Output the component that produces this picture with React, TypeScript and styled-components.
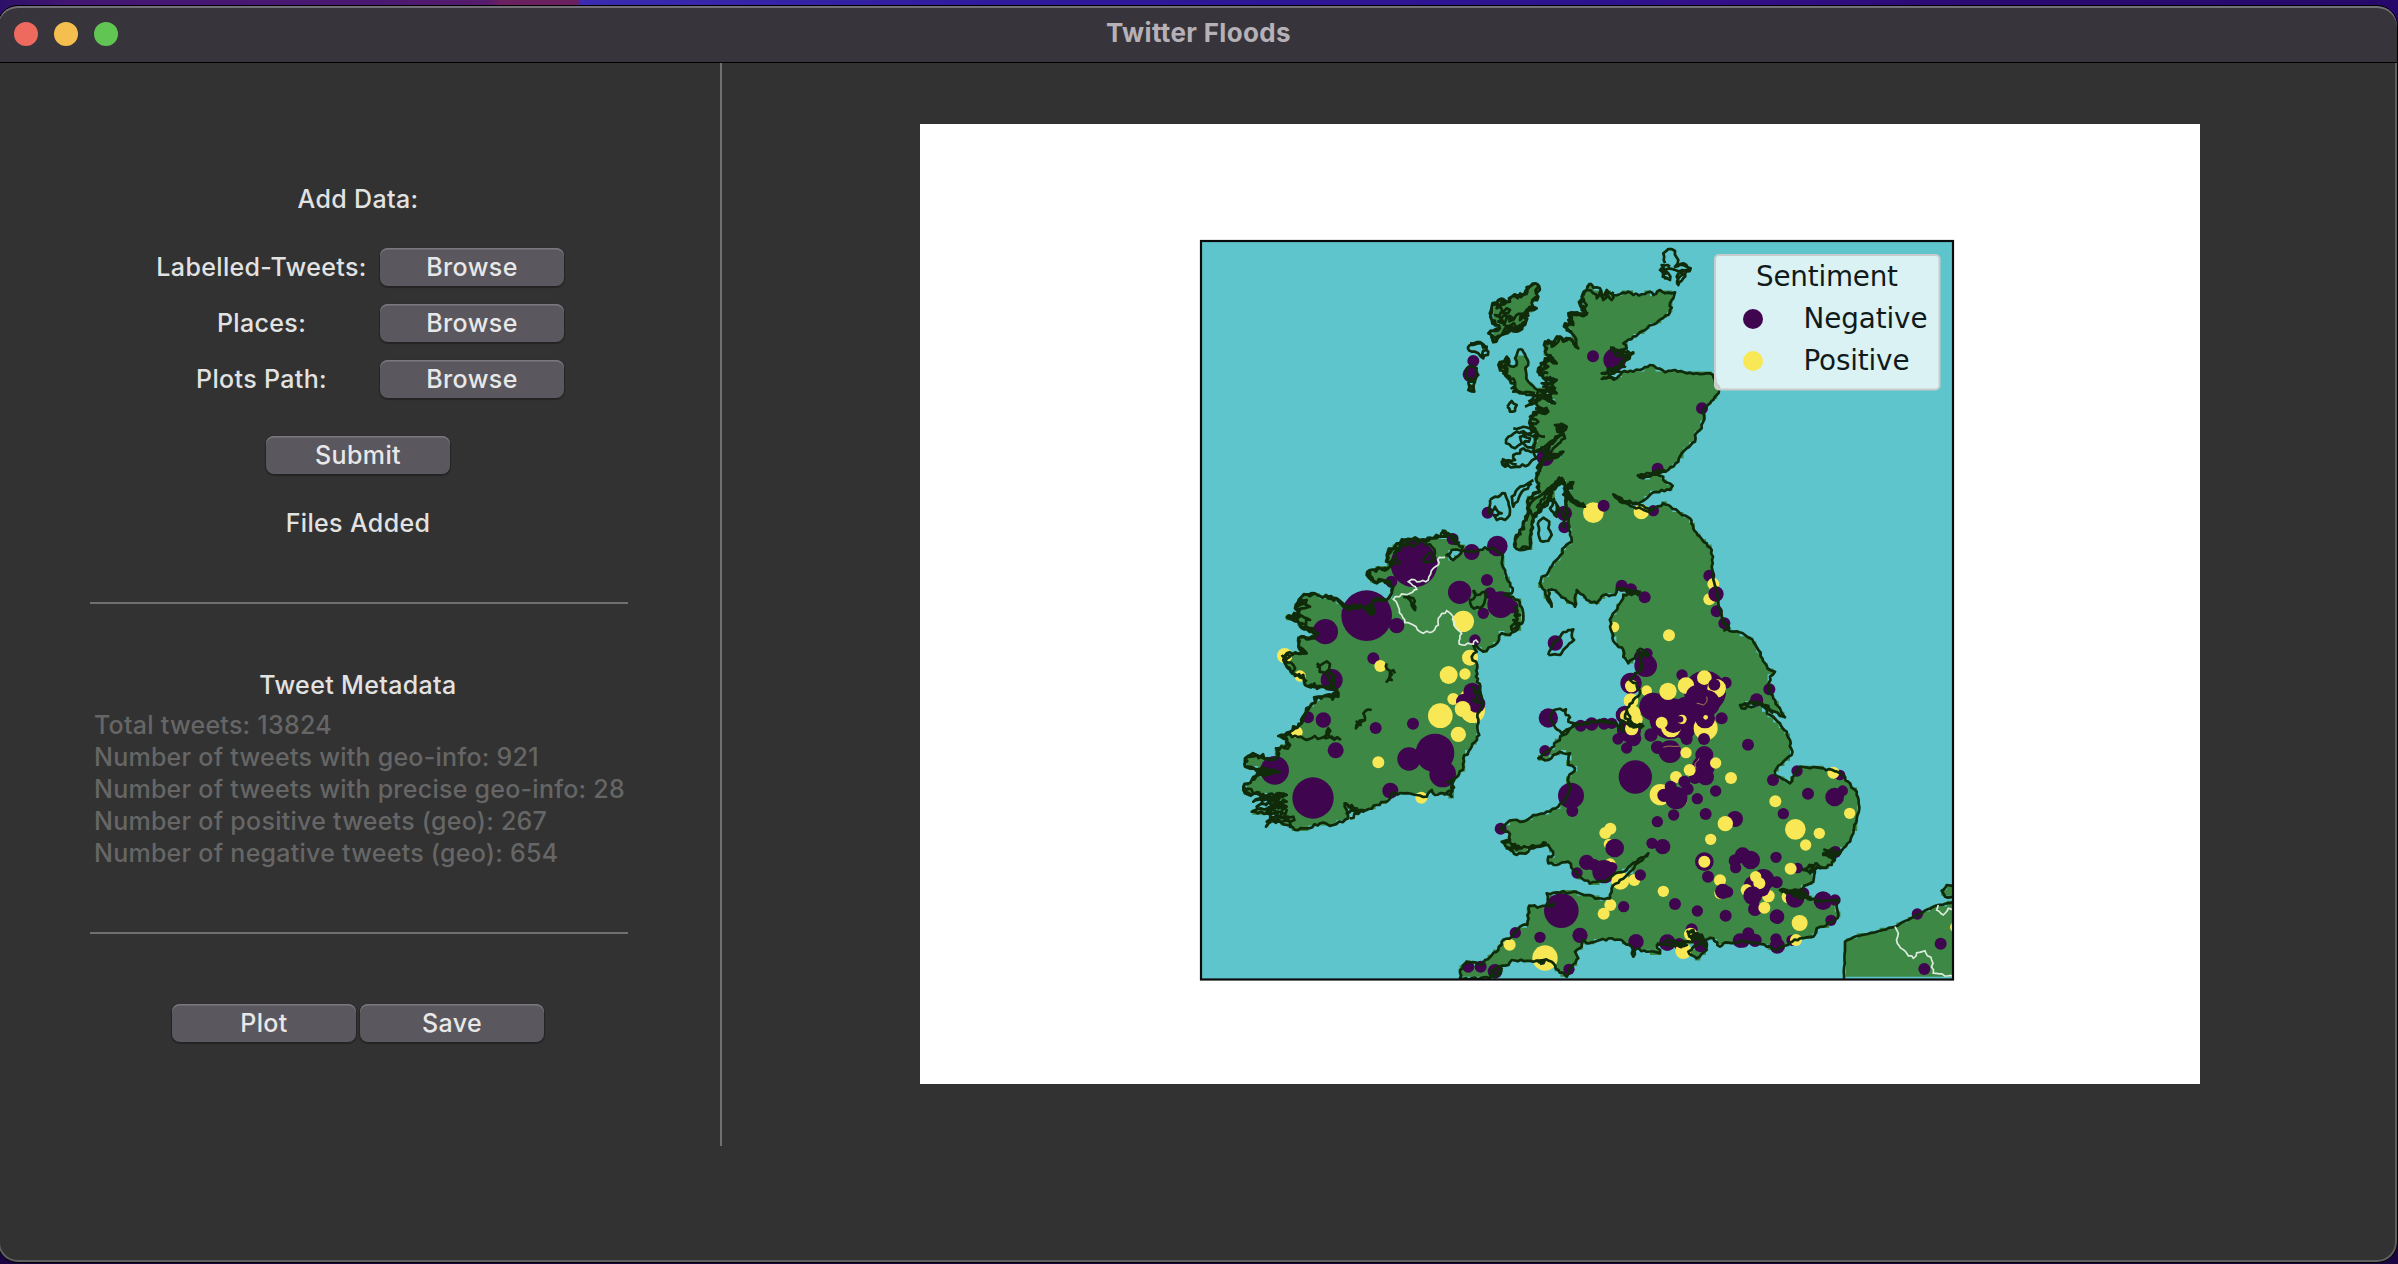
import React from 'react';
import styled, { createGlobalStyle } from 'styled-components';

const GlobalStyle = createGlobalStyle`
  * { box-sizing: border-box; }
  html, body { margin: 0; padding: 0; }
  body {
    height: 1264px;
    overflow: hidden;
    background: #1c0640;
    font-family: Inter, "Liberation Sans", sans-serif;
  }
`;

const Desktop = styled.div`
  width: 2398px;
  height: 1264px;
  padding-top: 5px;
  overflow: hidden;
  background:
    linear-gradient(90deg, #2c1068 0, #431673 70px, #4a1870 380px, #571c6c 490px, #6b2060 500px, #6a205e 578px, #3a2bb0 580px, #2f1a9c 1000px, #2c128e 1600px, #33108a 1700px, #2a0a70 2000px, #26086a 2398px) top / 100% 30px no-repeat,
    #1b0540;
`;

const Window = styled.div`
  display: flex;
  flex-direction: column;
  width: 2401px;
  height: 1258px;
  margin-left: -3px;
  border: 1px solid #000;
  border-radius: 21px;
  overflow: hidden;
  background: #323232;
  box-shadow: inset 0 0 0 2px #5f5f5f;
`;

const TitleBar = styled.header`
  display: grid;
  grid-template-columns: 1fr auto 1fr;
  align-items: center;
  flex: none;
  height: 57px;
  padding: 0 14px 0 16px;
  background: #38343b;
  border-bottom: 1px solid #000;
  border-radius: 20px 20px 0 0;
  box-shadow: inset 0 2px 0 #747078;
`;

const Lights = styled.div`
  display: flex;
  gap: 16px;
`;

const Light = styled.span<{ $color: string }>`
  width: 24px;
  height: 24px;
  border-radius: 50%;
  background: ${(p) => p.$color};
`;

const Title = styled.h1`
  margin: 0;
  padding-bottom: 3px;
  color: #b5b1b7;
  font-size: 26px;
  font-weight: 700;
  letter-spacing: 0.35px;
  line-height: 32px;
`;

const Content = styled.main`
  display: flex;
  align-items: flex-start;
  padding-left: 2px;
`;

const Sidebar = styled.section`
  display: flex;
  flex-direction: column;
  align-items: center;
  width: 720px;
  height: 1083px;
  padding: 120px 4px 0 0;
`;

const Label = styled.div<{ $top?: number }>`
  margin-top: ${(p) => p.$top ?? 0}px;
  color: #e2e2e2;
  font-size: 25px;
  font-weight: 450;
  line-height: 32px;
  letter-spacing: 0.35px;
  white-space: nowrap;
`;

const FileGrid = styled.div`
  display: grid;
  grid-template-columns: 209px 184px;
  column-gap: 14px;
  row-gap: 18px;
  align-items: center;
  justify-items: center;
  margin: 33px 0 38px 0;
  padding-left: 5px;
`;

const Button = styled.button`
  width: 184px;
  height: 38px;
  padding: 0;
  border: 0;
  border-radius: 8px;
  background: #5a575e;
  box-shadow: inset 0 1.5px 0 #7b787f, 0 1px 1px 1px rgba(0, 0, 0, 0.28);
  color: #e8e8e8;
  font: 450 25px/32px Inter, "Liberation Sans", sans-serif;
  letter-spacing: 0.4px;
`;

const Rule = styled.hr<{ $top: number; $bottom: number }>`
  flex: none;
  width: 538px;
  height: 2px;
  margin: ${(p) => p.$top}px 0 ${(p) => p.$bottom}px 2px;
  border: 0;
  background: #707070;
`;

const MetaList = styled.div`
  width: 538px;
  margin: 8px 0 0 2px;
  padding-left: 4px;
  color: #666;
  font-size: 25px;
  font-weight: 450;
  line-height: 32px;
  letter-spacing: 0.25px;
  white-space: nowrap;
`;

const Actions = styled.div`
  display: flex;
  gap: 4px;
`;

const Divider = styled.div`
  flex: none;
  width: 2px;
  height: 1083px;
  background: #707070;
`;

const PlotArea = styled.section`
  padding: 61px 0 0 198px;
`;

const Figure = styled.svg`
  display: block;
  width: 1280px;
  height: 960px;
  background: #fff;
`;

type Pt = [number, number];

/* Coordinates are kept at three units per figure pixel, relative to a tile origin. */
const tile = (ox: number, oy: number, text: string): Pt[] =>
  text.trim().split(/\s+/).map((pair) => {
    const [x, y] = pair.split(',').map(Number);
    return [ox + x / 3, oy + y / 3] as Pt;
  });

const nw = (t: string) => tile(1420, 235, t);
const mid = (t: string) => tile(1440, 480, t);
const low = (t: string) => tile(1440, 640, t);
const south = (t: string) => tile(1440, 760, t);
const west = (t: string) => tile(1190, 500, t);

const makeRandom = (seed: number) => {
  let s = seed;
  return () => {
    s = (s * 16807) % 2147483647;
    return s / 2147483647 - 0.5;
  };
};

/* Breaks each leg into short steps pushed sideways, as a surveyed shore looks. */
const shore = (pts: Pt[], amp = 2.4, seed = 11): string => {
  const rnd = makeRandom(seed * 7919);
  const out: Pt[] = [pts[0]];
  for (let i = 1; i < pts.length; i++) {
    const [ax, ay] = pts[i - 1];
    const [bx, by] = pts[i];
    const len = Math.hypot(bx - ax, by - ay);
    const n = Math.max(1, Math.round(len / 3));
    for (let k = 1; k < n; k++) {
      const t = k / n;
      const d = rnd() * amp;
      out.push([ax + (bx - ax) * t - ((by - ay) / len) * d, ay + (by - ay) * t + ((bx - ax) / len) * d]);
    }
    out.push([bx, by]);
  }
  return 'M' + out.map(([x, y]) => x.toFixed(1) + ' ' + y.toFixed(1)).join('L');
};

const inside = (x: number, y: number, poly: Pt[]) => {
  let hit = false;
  for (let i = 0, j = poly.length - 1; i < poly.length; j = i++) {
    const [xi, yi] = poly[i];
    const [xj, yj] = poly[j];
    if (yi > y !== yj > y && x < ((xj - xi) * (y - yi)) / (yj - yi) + xi) hit = !hit;
  }
  return hit;
};

const CELL_W = 5.6;
const CELL_H = 5.4;

/* The land layer is a coarse raster: runs of cells whose centre lies on land. */
const raster = (polys: Pt[][]): string => {
  let d = '';
  for (let y = 242; y < 980; y += CELL_H) {
    let start = -1;
    for (let x = 1202; x < 1962; x += CELL_W) {
      const land = x < 1954 && polys.some((p) => inside(x + CELL_W / 2, y + CELL_H / 2, p));
      if (land && start < 0) start = x;
      if (!land && start >= 0) {
        d += `M${start.toFixed(1)} ${y.toFixed(1)}H${x.toFixed(1)}v${CELL_H + 0.3}H${start.toFixed(1)}z`;
        start = -1;
      }
    }
  }
  return d;
};

const highlandWest: Pt[] = nw(
  '440,795 432,760 460,742 440,770 460,800 495,815 455,800 435,770 430,735 395,765 385,800 345,835 340,850 330,905 330,940 290,942 285,920 310,870 325,830 325,790 360,770 350,740 355,690 370,680 430,650 400,670 370,650 410,610 440,575 405,570 430,590 380,630 340,650 350,590 330,580 330,555 350,530 385,530 350,510 360,480 405,505 380,480 360,465 410,475 370,455 410,435 370,430 355,400 375,370 410,385 375,350 375,320 400,325 410,305 430,320 450,310 475,340 460,300 440,280 435,265 460,265 445,235 500,238 480,210 485,185 500,165 510,145',
);

const britain: Pt[] = [
  ...nw('510,145 520,158 540,160 545,185 560,165 580,180 600,178 625,170 640,180 665,178 690,170 700,180 720,165 735,175 765,172 760,190 750,205 755,218 745,240 715,258 695,270 660,292 640,305 610,325 620,340 600,352 575,345 600,365 640,355 620,375 600,395 560,430 545,432 590,430 605,412 640,410 660,405 690,390 710,400 735,412 765,405 800,415 830,415 870,415 885,435 897,465 890,480 870,505 850,525 850,560 845,580 825,600 825,620 800,640 785,655 775,680 760,695 740,708 700,712 655,722 670,730 710,718 730,725 735,740 758,752 750,765 700,772 680,790 655,805 620,800 590,790 580,778 600,800 640,815 690,830 705,820 730,805 745,810 780,835 810,850 820,880 840,905 860,925'),
  ...mid('815,210 818,250 820,290 830,330 835,370 845,410 860,445 880,455 915,465 940,485 955,510 970,545 990,570'),
  ...low('1005,95 990,110 988,150 1000,175 1020,205 1035,232 1005,215 985,205 965,190 930,190 900,195 905,205 960,192 990,225 1020,250 1040,275 1050,300 1055,345 1030,365 1010,385 1005,405 1035,420 1050,430 1065,405 1080,380 1110,385 1150,385 1200,400 1225,425 1250,455 1258,500 1250,540 1240,580'),
  ...south('1230,245 1210,265 1190,285 1150,280 1185,292 1175,315 1140,325 1130,310 1090,330 1125,335 1120,365 1100,375 1080,390 1020,390 1060,400 1100,410 1140,425 1195,420 1190,440 1195,465 1180,485 1150,500 1130,505 1120,530 1080,535 1050,548 1010,570 980,560 950,548 900,545 850,550 840,560 820,535 795,540 800,570 770,595 745,575 760,560 790,550 760,510 745,520 760,545 735,545 700,555 650,555 660,580 620,575 590,565 580,590 575,560 545,540 515,535 480,540 440,550 430,540 425,560 405,575 415,595 395,620 380,650 355,630 335,605 310,600 280,605 215,600 205,615 170,620 150,655 60,655 60,630 80,605 120,615 135,600 175,570 185,545 215,530 240,500 262,495 268,437 300,440 325,430 320,400 360,398 400,395 440,405 475,415 510,415 515,385 540,360 570,335 600,305 625,280 590,305 560,330 520,345 490,365 450,370 425,355 400,330 385,305 350,315 325,310 325,290 340,285 325,255 300,260 270,265 265,275 230,285 210,270 185,245 210,240 205,215 180,207 200,190 220,180 250,185 280,165 320,155 355,140 375,120 390,90 383,60 405,25'),
  ...low('385,375 390,340 360,335 340,345 325,360 295,355 330,330 350,305 370,285 395,262 410,255 450,245 500,245 530,250 550,275 540,240 580,260 610,258 600,265 570,240 560,205 580,180 600,160 590,130 570,120 600,90 605,50 620,35 590,45 565,70 550,50 550,30'),
  ...mid('525,490 510,440 515,410 540,370 550,345 600,340 570,330 530,325 525,345 490,345 470,370 440,360 430,345 410,330 405,380 375,355 345,330 325,330 330,360 335,380 320,350 300,310 305,290 320,285 330,265 355,235 375,200 395,185 390,165 385,130 380,110 375,90'),
  ...highlandWest,
];

const ireland: Pt[] = west(
  '755,92 775,100 800,110 790,125 818,140 808,165 790,180 770,165 785,150 820,152 850,155 885,142 920,152 938,165 935,190 945,210 950,235 968,265 965,280 940,285 985,300 998,330 1000,360 985,385 960,405 935,400 915,435 880,455 850,435 860,455 845,470 862,495 858,530 870,560 875,590 880,610 862,650 868,705 845,740 820,775 818,810 795,835 785,855 785,890 760,880 735,885 725,870 710,890 680,885 640,880 605,880 590,905 560,915 520,935 490,930 465,910 475,955 430,975 390,970 350,985 315,990 290,975 250,955 228,980 240,960 300,965 250,940 185,935 240,920 290,920 235,900 270,885 290,885 210,885 165,880 160,860 185,840 215,820 250,815 165,800 165,775 200,765 240,780 265,770 258,745 300,735 290,715 265,708 300,695 335,670 360,620 385,590 445,590 440,570 400,560 345,555 340,535 310,520 290,500 280,480 290,460 350,460 325,440 325,415 375,415 385,400 335,385 325,365 290,352 330,345 315,325 335,290 375,280 390,288 440,295 465,325 520,320 545,345 545,305 560,295 590,300 605,280 610,260 580,240 560,250 530,225 540,210 600,200 590,165 620,130 665,118 700,125 730,115 770,110 755,92',
);
const lewis = nw('350,145 355,185 335,205 350,220 330,225 315,245 318,260 290,290 275,280 245,300 220,322 215,300 205,295 240,280 215,255 215,215 235,195 270,200 275,185 310,180 330,155 350,145');
const skye = nw('305,342 310,350 325,380 318,410 325,440 345,460 370,465 350,480 320,480 300,475 280,470 285,455 265,430 240,405 235,390 260,365 265,390 290,390 290,360 305,342');
const france = south('1212,656 1215,545 1250,528 1300,518 1365,500 1430,465 1480,440 1542,425 1542,656');
const franceTip = south('1542,378 1520,375 1505,392 1515,410 1542,412');
const kintyre = nw('420,725 400,750 370,775 335,800 325,820 340,850 375,800 405,790');
const landPath = raster([britain, ireland, lewis, skye, france, franceTip, kintyre]);

const anglesey = low('330,238 342,210 378,208 378,225 390,232 385,245 410,250 395,262 365,280 345,262 330,238');
const man = mid('325,525 345,485 365,462 385,450 400,448 395,465 402,480 375,505 360,525 325,525');

const coasts: string[] = [
  shore(britain, 2.6, 5),
  shore(highlandWest, 5, 14),
  shore(ireland, 2.8, 9),
  shore(ireland.slice(68), 6, 31),
  shore(lewis, 4.5, 3),
  shore(lewis, 5, 17),
  shore(skye, 4, 7),
  shore(france.slice(0, 8), 1, 8),
  shore(franceTip, 2, 8),
  shore(kintyre, 2, 8),
  shore(anglesey, 2.4, 2),
  shore(man, 2, 2),
];

/* Lochs, sea islands and estuaries. */
const details: string[] = [
  shore(nw('735,85 730,55 745,42 765,48 775,75 765,95 790,85 812,100 795,115 790,130 775,150 770,125 790,108 745,100 720,105 735,130 750,135 745,115 725,90 750,95'), 3, 4),
  shore(nw('770,88 800,95 810,102 785,105 790,118 775,130 772,148'), 3, 5),
  shore(nw('720,100 740,115 728,125 748,134'), 3, 6),
  shore(nw('145,345 150,330 175,325 200,335 205,350 190,370 175,355 165,350 145,345'), 5, 4),
  shore(nw('150,325 190,328 200,345 180,365'), 5, 8),
  shore(nw('150,392 170,400 175,420 160,438 140,430 137,410 150,392'), 4, 6),
  shore(nw('145,440 165,440 163,470 145,465 145,440'), 3, 6),
  shore(nw('148,450 160,460 150,466'), 3, 6),
  shore(nw('262,515 275,498 290,510 285,528 270,530 262,515'), 2, 6),
  shore(nw('235,400 265,380 250,415 270,425 245,390 265,365'), 5, 12),
  shore(nw('240,385 262,400 255,420 285,440 275,460 300,470 345,475'), 5, 13),
  shore(nw('315,515 340,495 365,490 325,510 350,480 325,500'), 3, 12),
  shore(nw('360,400 385,395 362,385 380,372 360,420 385,415'), 4, 12),
  shore(nw('380,330 385,315 400,320 395,335 410,325 415,308'), 4, 12),
  shore(nw('280,580 310,575 345,580 330,595 290,590 265,605 258,625 285,640 305,625 300,605 330,600 375,605'), 3, 15),
  shore(nw('340,650 310,640 300,655 280,660 285,675 245,680 255,695 325,690 350,670 340,650'), 3.2, 19),
  shore(nw('300,590 330,610 310,625 340,640'), 4, 20),
  shore(nw('245,672 265,690 250,688 262,676 290,688'), 4, 19),
  shore(nw('340,735 300,755 275,785 280,815 300,780 335,745'), 2.4, 22),
  shore(nw('210,795 225,785 255,775 265,800 270,830 255,855 230,855 222,840 245,835 225,815 205,835 210,795'), 3, 23),
  shore(nw('355,860 370,848 388,860 385,880 395,900 385,918 362,918 355,895 355,860'), 1.6, 24),
  shore(nw('380,770 400,800 390,820 410,845 405,800 420,830 430,850'), 4, 25),
  shore(nw('440,750 438,790 435,850 432,880'), 4, 26),
  shore(nw('446,745 436,800 442,840'), 4, 27),
  shore(nw('445,770 460,795 495,815'), 3, 27),
  shore(nw('430,728 395,752 375,780 350,820'), 3, 28),
  shore(nw('370,650 385,640 370,670 390,660 365,690 350,700'), 6, 29),
  shore(nw('380,655 400,640 435,610 410,580 435,576'), 4, 29),
  shore(nw('570,338 585,350 615,350 600,360 640,352 615,372 600,385 615,395 580,405 600,410 550,428 585,432'), 5, 33),
  shore(nw('560,400 590,395 545,415 580,410'), 4, 32),
  shore(nw('500,165 520,175 530,190 540,170 550,195 560,175 575,195 580,170'), 4, 34),
  shore(nw('480,205 490,190 500,210 485,225 505,235'), 4, 35),
  shore(nw('445,240 470,235 445,255 460,270 435,270 455,295'), 4, 36),
  shore(nw('355,420 400,430 365,445 405,460 365,470 400,500'), 5, 37),
  shore(nw('345,520 375,528 330,545 355,560 330,570 350,585'), 4, 38),
  shore(nw('650,720 670,728 700,715 740,710'), 3, 39),
  shore(nw('585,782 620,800 660,810 700,828'), 3, 39),
  shore(nw('220,210 260,200 230,220 270,225 225,240 280,250 235,260 300,270 250,290'), 7, 40),
  shore(nw('265,260 315,235 300,255 340,215 310,250'), 6, 41),
  shore(west('610,160 640,130 620,150 660,120 670,140 700,118 725,140 735,160 720,185 700,180 725,155'), 6, 42),
  shore(west('600,185 620,165 600,200 630,180'), 5, 43),
  shore(west('470,330 500,318 525,325 545,345 550,320 530,318 555,330'), 6, 44),
  shore(west('650,285 670,295 675,330 660,300 640,290'), 3, 45),
  shore(west('590,490 600,520 590,545 605,540 600,515 615,520'), 5, 46),
  shore(west('545,630 520,640 525,660 500,665 498,685 520,660'), 5, 46),
  shore(west('850,270 860,285 885,275 885,300 870,325 845,320 840,300 855,290 850,270'), 3, 46),
  shore(west('380,490 420,492 410,515 435,530 430,560 415,530 380,498'), 5, 47),
  shore(west('420,520 435,545 425,565 445,580 420,590'), 5, 49),
  shore(west('330,290 350,300 320,320 360,320 315,345 360,360 330,380 370,385 365,400'), 6, 48),
  shore(west('275,465 300,470 285,485 310,495 305,520 340,525 350,545'), 5, 48),
  shore(west('290,705 340,715 400,712 450,718 420,710 415,685 400,712'), 4, 49),
  shore(west('210,805 270,815 215,825 265,812'), 4, 50),
  shore(west('165,870 230,890 190,905 280,890 200,920 290,905 230,935 290,930 230,965 310,950 300,985'), 6, 51),
  shore(west('460,912 500,925 470,940 520,930 480,955'), 5, 52),
  shore(west('970,320 990,345 970,360 990,370 965,390 985,330'), 5, 53),
  shore(west('770,850 790,835 785,870 760,885'), 5, 54),
  shore(west('845,560 870,580 850,600 875,610'), 6, 54),
  shore(west('735,118 760,95 790,120 810,130'), 4, 54),
  shore(low('560,205 555,235 580,262 610,255'), 4, 55),
  shore(low('410,255 470,245 520,248 555,270'), 4, 55),
  shore(low('900,200 930,185 975,195 1000,220'), 4, 56),
  shore(south('1020,390 1060,395 1100,405 1060,408 1140,420'), 6, 57),
  shore(south('1150,268 1195,275 1150,285 1180,300'), 5, 58),
  shore(south('1085,328 1135,315 1110,340 1145,320'), 5, 58),
  shore(south('740,512 790,535 750,530 795,560'), 6, 59),
  shore(south('650,550 700,545 740,555 690,560'), 5, 60),
  shore(south('150,630 185,625 155,650 185,640'), 6, 61),
  shore(south('190,240 240,265 200,265 270,262 320,250'), 4, 62),
  shore(south('290,600 315,600 300,612'), 6, 63),
  shore(south('320,432 345,430 325,440'), 5, 63),
  shore(mid('540,320 560,335 600,335 575,345'), 5, 64),
  shore(mid('590,515 625,520 600,540 610,570'), 7, 65),
  shore(mid('850,430 868,445 850,452'), 3, 65),
];

const borders: string[] = [
  shore(west('765,172 748,172 745,195 730,205 715,240 690,245 665,238 655,245 680,268 660,280 635,282 610,298 625,320 635,345 645,368 670,375 690,395 720,398 745,375 745,355 770,332 790,350 792,375 815,400 808,432 850,432 858,420 865,428'), 2.6, 71),
  shore(south('1365,500 1375,520 1372,550 1400,580 1420,595 1430,578 1455,572 1475,600 1480,640 1540,650'), 2.4, 72),
  shore(south('1495,435 1490,450 1510,465 1525,445 1540,450'), 2, 73),
];

type Dot = { x: number; y: number; r: number; fill: string };
const NEGATIVE = '#3f054f';
const POSITIVE = '#f9e855';

/* Each entry: tone (n/p), x, y and radius. Drawn in order. */
const dots = (ox: number, oy: number, text: string): Dot[] =>
  text.trim().split(/\s+/).map((item) => {
    const [x, y, r] = item.slice(1).split(',').map(Number);
    return { x: ox + x / 3, y: oy + y / 3, r: r / 3, fill: item[0] === 'n' ? NEGATIVE : POSITIVE };
  });

const tweets: Dot[] = [
  ...dots(1420, 235, 'n519,364,18 n584,374,34 n160,378,18 n152,418,24 n846,520,18 n376,667,26 n713,701,18 p520,833,31 n551,812,18 p664,830,23 n700,827,17 n203,833,18 n433,835,23 n433,877,18'),
  ...dots(1190, 500, 'n672,192,70 n788,117,18 n845,156,24 n922,138,31 n604,245,18 n530,347,76 n620,377,23 n406,395,38 n809,277,35 n891,240,18 n900,280,18 n932,314,40 n965,320,20 n880,340,17 p820,364,32 n855,420,17 p840,473,24 n550,475,18 p571,498,18 p284,467,23 p330,528,17 n425,540,33 p776,525,27 p825,522,17 p790,597,18 p830,590,20 p848,632,37 n847,575,27 n860,612,26 n822,605,24 p818,627,24 p751,647,37 n669,671,18 n557,684,18 n400,660,23 n354,652,18 p320,697,18 p805,703,23 n437,751,24 p565,787,18 n735,759,58 n657,777,35 n758,822,40 n254,811,43 n369,894,62 n601,872,24 p694,893,18'),
  ...dots(1440, 480, 'n346,489,23 n808,287,18 p820,312,18 p808,358,18 n828,342,23 n830,394,18 n853,430,18 n545,317,18 n573,328,18 n614,352,18 p522,441,16 p687,466,18 n617,557,34 n622,520,16 n600,530,18'),
  ...dots(1440, 640, 'n325,234,29 n315,332,17 n422,257,18 n455,252,20 n492,251,18 n515,250,17 n573,130,32 p574,138,19 n726,105,17 p620,152,16 p573,182,22 n795,155,63 p738,137,25 n773,170,36 p793,113,22 n857,128,18 p830,145,28 n823,134,18 n555,225,28 n567,270,36 n640,200,42 n690,235,62 n740,215,45 n800,190,40 n735,270,30 n534,297,17 n580,295,24 n560,324,17 n633,285,20 n653,322,20 n690,335,34 p684,154,26 p558,228,18 p578,220,24 p590,238,18 p575,266,20 p693,262,30 n700,250,29 p665,248,18 p726,238,14 n720,238,10 p797,265,36 n795,235,30 n740,297,18 n792,297,18 n845,235,18 p797,232,7 n793,345,27 n790,380,34 n797,411,25 n765,414,18 p738,338,17 p827,369,17 p749,390,18 p708,411,18 p873,414,18 n586,411,50 n393,467,39 n397,513,18 p661,464,32 n672,466,20 p715,477,28 n709,474,34 n692,440,18 n733,425,18 n743,447,18 n827,453,17 n772,476,17 n797,522,18 n701,525,17 n652,545,17 n924,314,18 n988,148,18 n950,180,20 n999,420,18 n1071,393,17 n1200,405,16 p1180,398,18 n1104,461,18 n1184,471,28 n1208,452,16 p1006,484,18 n1030,521,17 p1229,520,17 n885,537,24 p856,551,23 p1066,568,31 p1138,580,17'),
  ...dots(1440, 760, 'n182,206,18 p511,206,18 p496,219,18 p507,252,16 n524,264,28 n636,250,17 n668,260,23 p812,238,17 p1097,255,17 n793,305,28 p793,305,18 n804,350,18 n440,307,23 n411,339,17 p510,312,17 n516,322,16 n463,315,18 n492,335,35 p541,362,27 p583,360,18 n601,345,17 p670,394,17 p511,435,18 p491,461,18 n551,440,17 n364,452,52 n420,526,23 n226,518,17 n300,532,17 p209,554,18 p315,594,38 n387,628,17 n85,620,18 n122,620,18 n165,634,22 p840,361,18 p841,400,18 n848,394,23 n863,396,17 n705,432,18 n772,453,17 n857,467,18 n908,286,24 n932,300,28 n885,302,19 n887,323,17 n1008,292,17 n1073,324,16 p1052,326,18 n970,360,33 n1010,367,18 n940,375,28 p920,390,18 p947,350,17 p985,408,19 n965,385,25 p958,370,18 n938,407,28 n945,447,21 p973,443,18 p1045,410,20 n1065,415,28 n1090,400,18 n1149,422,28 n1185,420,17 n1011,470,22 p1079,489,24 n1173,481,17 n588,545,23 n682,548,25 n718,552,18 n755,508,18 p752,523,20 p730,573,24 n783,555,22 n770,535,18 n900,542,22 n925,520,18 n945,541,20 n910,545,18 n1008,537,17 n1012,558,23 n1056,541,17 p1068,540,18 n1186,276,18 n1432,462,17 n1502,551,18 n1453,627,18 p1546,502,16'),
];

/* Thin gaps that stay visible between overlapping markers. */
const markerArcs = [
  shore(low('770,190 790,195 800,185 800,170'), 1, 3),
  shore(low('670,322 690,318 720,318'), 1, 3),
  shore(low('768,385 765,370 778,355'), 1, 3),
];

const FloodMap = () => (
  <Figure viewBox="920 124 1280 960">
    <defs>
      <clipPath id="axes">
        <rect x="1201" y="241" width="752" height="738" />
      </clipPath>
    </defs>
    <g clipPath="url(#axes)">
      <rect x="1201" y="241" width="752" height="738" fill="#5fc5cc" />
      <path d={landPath} fill="#3d8845" />
      {tweets.map((t, i) => (
        <circle key={i} cx={t.x} cy={t.y} r={t.r} fill={t.fill} />
      ))}
      <path d={markerArcs.join('')} fill="none" stroke="#b08a50" strokeWidth="0.9" />
      <path d={coasts.join('') + details.join('')} fill="none" stroke="#0f2b0a" strokeWidth="2.7" strokeLinejoin="round" />
      <path d={borders.join('')} fill="none" stroke="#dcebdd" strokeWidth="1.7" />
    </g>
    <rect x="1201" y="241" width="752" height="738.500" fill="none" stroke="#0a0a0a" strokeWidth="2.2" />
    <rect x="1715" y="255" width="224.500" height="134.500" rx="4" fill="#fff" fillOpacity="0.77" stroke="#c9cccc" strokeWidth="2" />
    <circle cx="1753" cy="319" r="10" fill={NEGATIVE} />
    <circle cx="1753" cy="361" r="10" fill={POSITIVE} />
    <g fill="#111a1a" fontFamily='"DejaVu Sans", sans-serif' fontSize="27.8">
      <text x="1756" y="286" textLength="142">Sentiment</text>
      <text x="1803.500" y="328" textLength="124">Negative</text>
      <text x="1803.500" y="370" textLength="106">Positive</text>
    </g>
  </Figure>
);

const FILES = ['Labelled-Tweets:', 'Places:', 'Plots Path:'];
const METADATA = [
  'Total tweets: 13824',
  'Number of tweets with geo-info: 921',
  'Number of tweets with precise geo-info: 28',
  'Number of positive tweets (geo): 267',
  'Number of negative tweets (geo): 654',
];

export default function App() {
  return (
    <Desktop>
      <GlobalStyle />
      <Window>
        <TitleBar>
          <Lights>
            <Light $color="#ee6a5f" />
            <Light $color="#f5bf4f" />
            <Light $color="#61c554" />
          </Lights>
          <Title>Twitter Floods</Title>
        </TitleBar>
        <Content>
          <Sidebar>
            <Label>Add Data:</Label>
            <FileGrid>
              {FILES.map((name) => (
                <React.Fragment key={name}>
                  <Label>{name}</Label>
                  <Button>Browse</Button>
                </React.Fragment>
              ))}
            </FileGrid>
            <Button>Submit</Button>
            <Label $top={33}>Files Added</Label>
            <Rule $top={63} $bottom={65} />
            <Label>Tweet Metadata</Label>
            <MetaList>
              {METADATA.map((line) => (
                <div key={line}>{line}</div>
              ))}
            </MetaList>
            <Rule $top={63} $bottom={70} />
            <Actions>
              <Button>Plot</Button>
              <Button>Save</Button>
            </Actions>
          </Sidebar>
          <Divider />
          <PlotArea>
            <FloodMap />
          </PlotArea>
        </Content>
      </Window>
    </Desktop>
  );
}
